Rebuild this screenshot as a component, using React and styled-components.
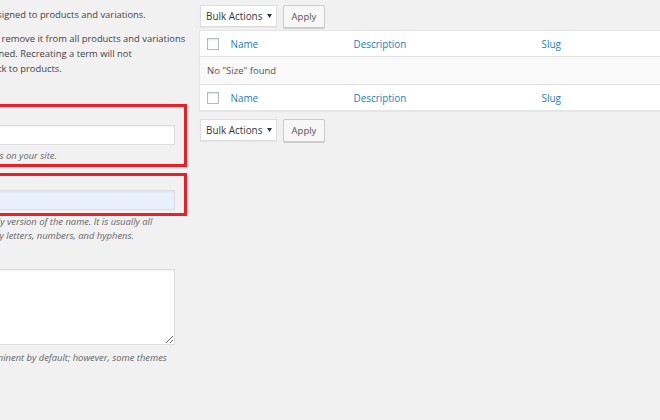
import styled, { createGlobalStyle } from "styled-components";

const GlobalStyle = createGlobalStyle`
  html, body {
    margin: 0;
    padding: 0;
    background: #f1f1f1;
    overflow: hidden;
  }
  body {
    font-family: "Open Sans", "Noto Sans", sans-serif;
    color: #444;
    font-size: 9.4px;
  }
`;

const Page = styled.div`
  display: flex;
  gap: 12px;
  width: 660px;
  height: 420px;
  overflow: hidden;
`;

const LeftCol = styled.div`
  flex: 0 0 300px;
  min-width: 0;
  margin-left: -113px;
  padding-top: 7px;
`;

const Para = styled.p`
  margin: 0 0 9px;
  line-height: 15px;
  white-space: nowrap;
`;

const Heading = styled.h2`
  margin: 6px 0 2px;
  font-size: 11px;
  line-height: 17px;
  font-weight: 600;
  color: #23282d;
`;

const Field = styled.div`
  border: 3px solid ${(p) => (p.$marked ? "#e8202a" : "transparent")};
  padding: ${(p) => p.$padTop || 0}px 0 ${(p) => p.$padBottom || 0}px;
  margin: ${(p) => p.$margin || "0"};
`;

const Label = styled.label`
  display: block;
  line-height: 14px;
  color: #23282d;
`;

const TextInput = styled.input`
  display: block;
  box-sizing: border-box;
  width: calc(100% - 9px);
  height: 20px;
  margin: 0;
  border: 1px solid #ddd;
  box-shadow: inset 0 1px 2px rgba(0, 0, 0, 0.07);
  background: ${(p) => (p.$autofill ? "#e8f0fe" : "#fff")};
  font: inherit;
  outline: none;
`;

const TextArea = styled.textarea`
  display: block;
  box-sizing: border-box;
  width: calc(100% - 9px);
  height: 76px;
  margin: 0 0 2px;
  border: 1px solid #ddd;
  box-shadow: inset 0 1px 2px rgba(0, 0, 0, 0.07);
  background: #fff;
  resize: vertical;
  font: inherit;
  outline: none;
`;

const Desc = styled.p`
  margin: ${(p) => p.$margin || "4px 0 0"};
  line-height: 14px;
  font-style: italic;
  color: #666;
  white-space: nowrap;
`;

const RightCol = styled.div`
  flex: 0 0 560px;
  padding-top: 5px;
`;

const TableNav = styled.div`
  display: flex;
  gap: 6px;
  height: 23px;
  margin: ${(p) => (p.$bottom ? "8px 0 0" : "0 0 2px")};
`;

const BulkSelect = styled.div`
  box-sizing: border-box;
  width: 77px;
  height: 22px;
  margin-left: 1px;
  display: flex;
  align-items: center;
  justify-content: space-between;
  padding: 0 4px 0 5px;
  background: #fff;
  border: 1px solid #ddd;
  box-shadow: 0 1px 1px rgba(0, 0, 0, 0.04);
  font-size: 9.9px;
  color: #32373c;
`;

const ApplyButton = styled.button`
  box-sizing: border-box;
  width: 42px;
  height: 23px;
  padding: 0;
  background: #f7f7f7;
  border: 1px solid #ccc;
  border-radius: 2px;
  box-shadow: 0 1px 0 #ccc;
  font-family: inherit;
  font-size: 9.5px;
  color: #555;
`;

const Table = styled.table`
  width: 100%;
  table-layout: fixed;
  border-collapse: collapse;
  background: #fff;
  border: 1px solid #e5e5e5;
  box-shadow: 0 1px 1px rgba(0, 0, 0, 0.04);
`;

const HeadCell = styled.th`
  height: 25px;
  padding: 0 0 0 ${(p) => (p.$check ? 7 : 8)}px;
  text-align: left;
  font-weight: 400;
  font-size: 9.9px;
  color: #1a7fbf;
  border-${(p) => (p.$foot ? "top" : "bottom")}: 1px solid #e1e1e1;
`;

const Checkbox = styled.span`
  display: block;
  box-sizing: border-box;
  width: 12px;
  height: 12px;
  border: 1px solid #b4b9be;
  background: #fff;
  box-shadow: inset 0 1px 2px rgba(0, 0, 0, 0.1);
`;

const EmptyCell = styled.td`
  height: 27px;
  padding: 0 0 0 7px;
  background: #f9f9f9;
  font-size: 9.5px;
  color: #555;
`;

function Caret() {
  return (
    <svg width="5" height="4" viewBox="0 0 5 4">
      <path d="M0 0h5L2.5 4z" fill="#32373c" />
    </svg>
  );
}

function BulkBar({ bottom }) {
  return (
    <TableNav $bottom={bottom}>
      <BulkSelect>
        <span>Bulk Actions</span>
        <Caret />
      </BulkSelect>
      <ApplyButton>Apply</ApplyButton>
    </TableNav>
  );
}

function HeaderRow({ foot }) {
  return (
    <tr>
      <HeadCell $check $foot={foot}>
        <Checkbox />
      </HeadCell>
      <HeadCell $foot={foot}>Name</HeadCell>
      <HeadCell $foot={foot}>Description</HeadCell>
      <HeadCell $foot={foot}>Slug</HeadCell>
    </tr>
  );
}

export default function App() {
  return (
    <>
      <GlobalStyle />
      <Page>
        <LeftCol>
          <Para>Attribute terms can be assigned to products and variations.</Para>
          <Para>
            <strong>Note</strong>: Deleting a term will remove it from all products and variations
            <br />
            to which it has been assigned. Recreating a term will not
            <br />
            automatically assign it back to products.
          </Para>
          <Heading>Add new Size</Heading>
          <Field $marked $padTop={4} $padBottom={1} $margin="0 0 6px">
            <Label>Name</Label>
            <TextInput type="text" />
            <Desc>The name is how it appears on your site.</Desc>
          </Field>
          <Field $marked $padBottom={3}>
            <Label>Slug</Label>
            <TextInput type="text" $autofill />
          </Field>
          <Desc $margin="-1px 0 0">
            The &ldquo;slug&rdquo; is the URL-friendly version of the name. It is usually all
            <br />
            lowercase and contains only letters, numbers, and hyphens.
          </Desc>
          <Field $margin="9px 0 0">
            <Label>Description</Label>
            <TextArea />
            <Desc $margin="6px 0 0">
              The description is not prominent by default; however, some themes
              <br />
              may show it.
            </Desc>
          </Field>
        </LeftCol>
        <RightCol>
          <BulkBar />
          <Table>
            <colgroup>
              <col style={{ width: 23 }} />
              <col style={{ width: 123 }} />
              <col style={{ width: 188 }} />
              <col />
            </colgroup>
            <thead>
              <HeaderRow />
            </thead>
            <tbody>
              <tr>
                <EmptyCell colSpan={4}>No &quot;Size&quot; found</EmptyCell>
              </tr>
            </tbody>
            <tfoot>
              <HeaderRow foot />
            </tfoot>
          </Table>
          <BulkBar bottom />
        </RightCol>
      </Page>
    </>
  );
}
